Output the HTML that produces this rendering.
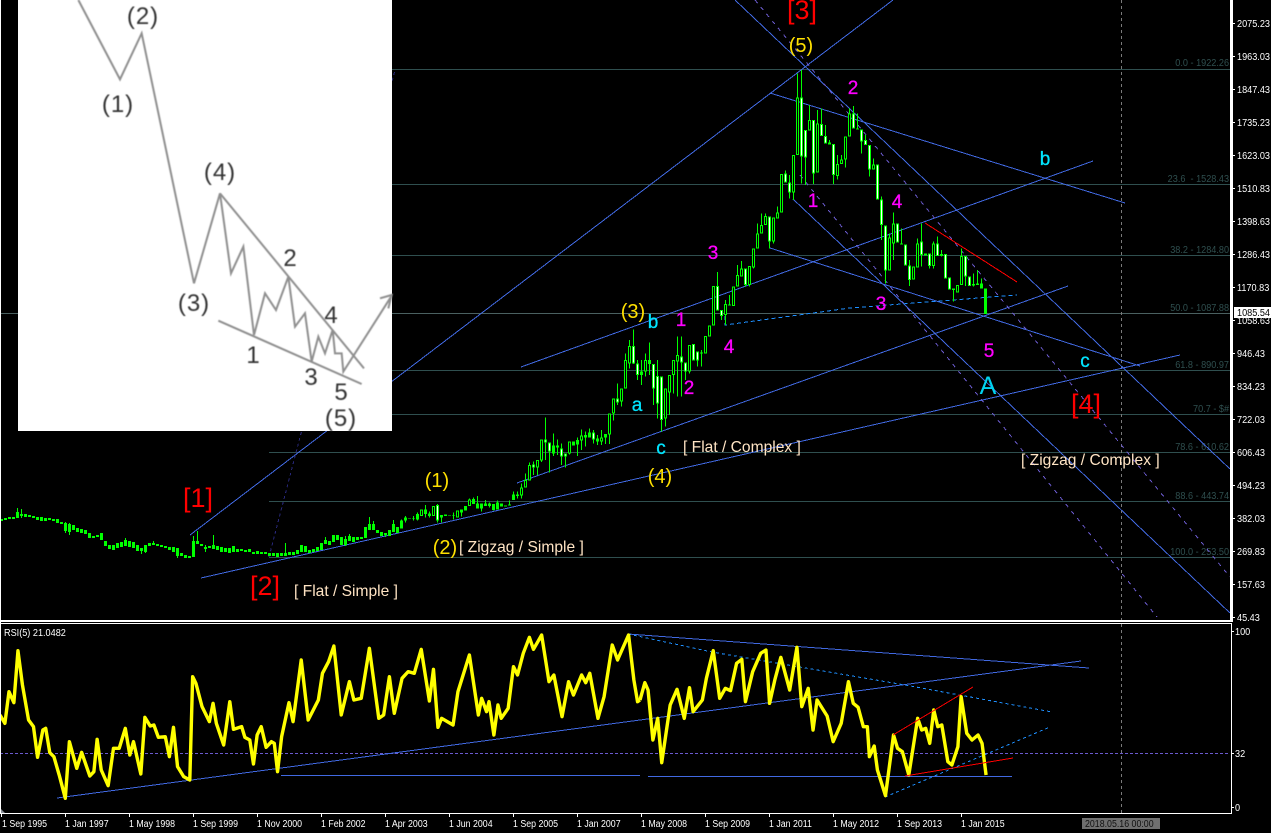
<!DOCTYPE html>
<html><head><meta charset="utf-8"><title>Chart</title>
<style>
html,body{margin:0;padding:0;background:#000;width:1271px;height:833px;overflow:hidden}
svg{display:block}
text{font-family:"Liberation Sans",Arial,sans-serif}
.ax,.dt{font-size:10.5px;fill:#fff;transform-box:fill-box;transform-origin:0 50%;transform:scaleX(.87)}
.dt{transform:scaleX(.84)}
.fb{font-size:10.5px;fill:#2f4f4f;text-anchor:end;transform-box:fill-box;transform-origin:100% 50%;transform:scaleX(.87)}
.y{font-size:20px;fill:#ffe000;text-anchor:middle}
.r{font-size:27px;fill:#f00;text-anchor:middle}
.m{font-size:19px;fill:#f0f;stroke:#f0f;stroke-width:.3px;text-anchor:middle}
.c{font-size:19px;fill:#00e5ff;stroke:#00e5ff;stroke-width:.3px;text-anchor:middle}
.b{font-size:15.6px;fill:#ffe4c4}
.i{font-size:24px;fill:#333;text-anchor:middle}
</style></head><body>
<svg width="1271" height="833" viewBox="0 0 1271 833" xmlns="http://www.w3.org/2000/svg">
<rect width="1271" height="833" fill="#000"/>

<!-- fib levels -->
<g stroke="#2f4f4f" stroke-width="1" shape-rendering="crispEdges" fill="none">
<path d="M269 69.5H1230M269 184.5H1230M269 255.5H1230M269 370.5H1230M269 414.5H1230M269 452.5H1230M269 501.5H1230M269 557.5H1230"/>
</g>
<path d="M0 313.5H1230" stroke="#4a6060" stroke-width="1" shape-rendering="crispEdges"/>
<path d="M1121.5 0V813" stroke="#7a7a7a" stroke-width="1" stroke-dasharray="3 3" shape-rendering="crispEdges"/>
<g>
<text class="fb" x="1229" y="66">0.0 - 1922.26</text>
<text class="fb" x="1229" y="182" xml:space="preserve">23.6  - 1528.43</text>
<text class="fb" x="1229" y="253">38.2 - 1284.80</text>
<text class="fb" x="1229" y="311">50.0 - 1087.88</text>
<text class="fb" x="1229" y="368">61.8 - 890.97</text>
<text class="fb" x="1229" y="412">70.7 - $#</text>
<text class="fb" x="1229" y="450">78.6 - 610.62</text>
<text class="fb" x="1229" y="499">88.6 - 443.74</text>
<text class="fb" x="1229" y="555">100.0 - 253.50</text>
</g>

<!-- trend lines -->
<g fill="none" stroke="#4169e1" stroke-width="1" shape-rendering="crispEdges">
<path d="M190 535L893 0"/>
<path d="M201 578L1180 355"/>
<path d="M517 483L1068 286"/>
<path d="M521 367L1093 161"/>
<path d="M770 93L1125 203"/>
<path d="M770 248L1140 366"/>
<path d="M735 0L1230 469"/>
<path d="M793 199L1230 613"/>
</g>
<g fill="none" stroke="#6a5acd" stroke-width="1" stroke-dasharray="4 5" shape-rendering="crispEdges">
<path d="M755 0L1230 577"/>
<path d="M800 175L1157 617"/>
</g>
<path d="M269 557L395 70" fill="none" stroke="#27277a" stroke-width="1" stroke-dasharray="3 3" shape-rendering="crispEdges"/>
<path d="M725 316V325L850 308L1017 295" fill="none" stroke="#1e90ff" stroke-width="1" stroke-dasharray="4 3" shape-rendering="crispEdges"/>
<path d="M925 223L1017 282" fill="none" stroke="#f00" stroke-width="1" shape-rendering="crispEdges"/>

<!-- candles 1995-2004 (pixel coords) -->
<g fill="none" stroke="#00ff00" shape-rendering="crispEdges">
<path stroke-width="1" d="M17.5 508V518M21.5 509V518M65.5 522V533M69.5 523V535M125.5 538V546M141.5 548V554M145.5 545V553M153.5 541V545M177.5 548V558M193.5 536V557M197.5 531V544M205.5 545V552M213.5 535V549M285.5 543V556M325.5 537V544M345.5 536V546M349.5 534V541M369.5 517V530M373.5 521V530M385.5 533V537M393.5 520V532"/>
<path stroke-width="3" d="M1.5 519V521M5.5 518V520M9.5 517V519M13.5 517V519M17.5 512V518M21.5 514V516M25.5 514V517M29.5 515V517M33.5 516V518M37.5 517V520M41.5 517V521M45.5 518V521M49.5 518V520M53.5 519V521M57.5 519V523M61.5 522V524M65.5 523V531M69.5 524V532M73.5 525V530M77.5 528V532M81.5 529V533M85.5 530V534M89.5 533V538M93.5 536V538M97.5 535V537M101.5 533V540M105.5 541V546M109.5 545V549M113.5 545V550M117.5 543V548M121.5 542V547M125.5 540V546M129.5 541V547M133.5 542V548M137.5 545V551M141.5 548V551M145.5 545V552M149.5 543V546M153.5 543V545M157.5 544V546M161.5 545V547M165.5 546V548M169.5 547V550M173.5 547V552M177.5 548V556M181.5 553V556M185.5 555V558M189.5 556V558M193.5 541V557M197.5 541V544M201.5 544V546M205.5 547V549M209.5 546V548M213.5 545V549M217.5 546V550M221.5 547V552M225.5 548V552M229.5 548V553M233.5 546V552M237.5 549V552M241.5 549V551M245.5 550V552M249.5 549V552M253.5 552V554M257.5 551V554M261.5 552V554M265.5 552V554M269.5 553V556M273.5 553V556M277.5 553V557M281.5 553V556M285.5 553V556M289.5 552V555M293.5 552V555M297.5 550V554M301.5 545V552M305.5 546V552M309.5 550V553M313.5 549V552M317.5 547V551M321.5 543V550M325.5 540V544M329.5 541V545M333.5 535V542M337.5 535V540M341.5 537V545M345.5 539V545M349.5 536V541M353.5 537V542M357.5 537V540M361.5 537V539M365.5 527V538M369.5 524V530M373.5 524V530M377.5 530V533M381.5 532V536M385.5 533V535M389.5 530V536M393.5 524V532M397.5 527V533"/>
</g>
<!-- candles 2004-2005 -->
<g transform="translate(400.17,480) scale(.33333)" fill="none" shape-rendering="crispEdges">
<path stroke="#00ff00" stroke-width="3" d="M4 118V145M16 108V128M28 114V116M40 108V122M52 98V122M64 88V108M76 75V112M88 95V113M100 78V108M112 72V128M124 105V128M136 103V108M148 106V108M160 98V118M172 92V112M184 88V110M196 78V92M208 55V78M220 52V72M232 48V85M244 70V95M256 60V78M268 68V82M280 72V92M292 62V88M304 70V80M316 76V80M328 62V76"/>
<path stroke="#00ff00" stroke-width="9" d="M4 122V145M16 113V122M28 114V116M40 114V116M52 102V118M64 88V108M76 88V102M88 100V108M100 78V108M112 75V122M124 105V113M136 103V108M148 106V108M160 106V108M172 92V112M184 88V98M196 78V92M208 58V78M220 57V72M232 70V85M244 70V85M256 70V78M268 70V78M280 72V90M292 68V88M304 70V80M316 76V80M328 73V76"/>
<path stroke="#000" stroke-width="3" d="M100 81V105M64 91V105M208 61V75M172 95V109"/>
<path stroke="#fff" stroke-width="3" d="M112 78V119"/>
</g>
<!-- candles 2005-2007 -->
<g transform="translate(500.17,380) scale(.33333)" fill="none" shape-rendering="crispEdges">
<path stroke="#00ff00" stroke-width="3" d="M40 335V360M52 335V355M64 310V355M76 280V323M88 248V302M100 245V285M112 240V285M124 178V246M136 112V240M148 187V278M160 160V228M172 178V225M184 190V255M196 220V262M208 184V224M220 184V197M232 172V228M244 148V210M256 155V200M268 145V172M280 150V190M292 165V195M304 150V195M316 162V192M328 100V192M340 55V122M352 10V75"/>
<path stroke="#00ff00" stroke-width="9" d="M40 343V360M52 343V348M64 322V347M76 300V323M88 255V302M100 253V263M112 240V263M124 178V242M136 178V188M148 187V215M160 196V220M172 196V203M184 205V230M196 220V230M208 184V220M220 184V197M232 180V194M244 166V182M256 165V172M268 157V172M280 157V178M292 176V185M304 172V185M316 162V173M328 100V163M340 55V100M352 55V68"/>
<path stroke="#000" stroke-width="3" d="M124 181V239M88 258V299M328 103V160M340 58V97M208 187V217M76 303V320M64 325V344M112 243V260M244 169V179M304 175V182"/>
<path stroke="#fff" stroke-width="3" d="M148 190V212M184 208V227M196 223V227M352 58V65M136 181V185M100 256V260M280 160V175"/>
</g>
<!-- candles 2007-2015 -->
<g transform="translate(620.17,60) scale(.33333)" fill="none" shape-rendering="crispEdges">
<path stroke="#00ff00" stroke-width="3" d="M4 985V1040M16 880V985M28 840V925M40 808V912M52 900V960M64 900V975M76 880V950M88 848V945M100 912V1035M112 900V1075M124 950V1115M136 985V1100M148 945V1065M160 900V1000M172 830V1010M184 830V1010M196 908V960M208 855V940M220 852V902M232 875V920M244 870V920M256 828V880M268 797V830M280 678V797M292 636V752M304 750V780M316 720V795M328 705V736M340 680V738M352 615V680M364 603V650M376 625V680M388 618V680M400 565V625M412 490V565M424 460V520M436 460V495M448 470V565M460 472V550M472 440V475M484 342V458M496 332V368M508 345V415M520 285V420M532 40V285M544 30V370M556 210V375M568 135V212M580 180V372M592 150V338M604 145V228M616 195V250M628 240V254M640 252V372M652 285V358M664 285V312M676 230V322M688 145V230M700 138V205M712 160V208M724 208V280M736 225V255M748 255V350M760 295V328M772 313V418M784 410V540M796 497V670M808 520V632M820 458V600M832 490V548M844 505V553M856 553V617M868 600V678M880 620V658M892 535V622M904 490V620M916 580V587M928 580V625M940 545V625M952 530V588M964 570V590M976 582V655M988 652V688M1000 685V724M1012 675V698M1024 565V675M1036 588V678M1048 650V678M1060 640V680M1072 630V675M1084 655V686"/>
<path stroke="#00ff00" stroke-width="9" d="M4 985V1025M16 900V985M28 858V910M40 858V910M52 910V945M64 935V945M76 900V935M88 900V912M100 912V985M112 948V1030M124 950V1080M136 985V1075M148 945V998M160 900V945M172 885V905M184 890V908M196 908V935M208 855V935M220 852V902M232 875V902M244 877V881M256 828V880M268 797V830M280 678V797M292 678V752M304 750V768M316 732V765M328 733V736M340 680V738M352 645V680M364 625V650M376 625V675M388 618V675M400 565V622M412 520V565M424 495V520M436 468V495M448 470V545M460 472V545M472 458V475M484 342V458M496 340V368M508 368V398M520 285V398M532 112V285M544 112V290M556 210V292M568 180V212M580 180V340M592 190V338M604 192V228M616 228V250M628 248V254M640 252V345M652 312V348M664 298V312M676 230V298M688 160V230M700 160V205M712 205V208M724 208V245M736 240V255M748 255V328M760 313V328M772 313V418M784 418V495M796 497V632M808 532V632M820 490V550M832 490V548M844 550V553M856 553V617M868 617V660M880 620V658M892 550V622M904 545V585M916 580V587M928 580V618M940 550V618M952 550V588M964 582V588M976 582V655M988 652V688M1000 685V690M1012 675V698M1024 588V675M1036 588V650M1048 650V678M1060 672V676M1072 670V675M1084 670V686M1096 685V762"/>
<path stroke="#000" stroke-width="3" d="M4 988V1022M16 903V982M28 861V907M76 903V932M136 988V1072M148 948V995M160 903V942M172 888V902M208 858V932M256 831V877M268 800V827M280 681V794M316 735V762M340 683V735M352 648V677M364 628V647M388 621V672M400 568V619M412 523V562M424 498V517M436 471V492M460 475V542M472 461V472M484 345V455M520 288V395M532 115V282M568 183V209M592 193V335M652 315V345M664 301V309M676 233V295M688 163V227M760 316V325M808 535V629M820 493V547M880 623V655M892 553V619M940 553V615M1012 678V695M1024 591V672"/>
<path stroke="#fff" stroke-width="3" d="M40 861V907M52 913V942M100 915V982M112 951V1027M124 953V1077M184 893V905M196 911V932M220 855V899M232 878V899M292 681V749M304 753V765M376 628V672M448 473V542M496 343V365M508 371V395M544 115V287M556 213V289M580 183V337M604 195V225M616 231V247M640 255V342M700 163V202M724 211V242M736 243V252M748 258V325M772 316V415M784 421V492M796 500V629M832 493V545M856 556V614M868 620V657M904 548V582M928 583V615M952 553V585M976 585V652M988 655V685M1036 591V647M1048 653V675"/>
</g>

<!-- wave labels -->
<text class="y" x="437" y="487">(1)</text>
<text class="y" x="445" y="554">(2)</text>
<text class="y" x="633" y="318">(3)</text>
<text class="y" x="660" y="483">(4)</text>
<text class="y" x="801" y="52">(5)</text>
<text class="r" x="198" y="507">[1]</text>
<text class="r" x="265" y="595">[2]</text>
<text class="r" x="802" y="19">[3]</text>
<text class="r" x="1086" y="413">[4]</text>
<text class="m" x="853" y="94">2</text>
<text class="m" x="813" y="207">1</text>
<text class="m" x="897" y="208">4</text>
<text class="m" x="881" y="310">3</text>
<text class="m" x="989" y="357">5</text>
<text class="m" x="713" y="259">3</text>
<text class="m" x="681" y="326">1</text>
<text class="m" x="729" y="353">4</text>
<text class="m" x="689" y="394">2</text>
<text class="c" x="637" y="411">a</text>
<text class="c" x="653" y="328">b</text>
<text class="c" x="661" y="454">c</text>
<text class="c" x="1045" y="165">b</text>
<text class="c" x="1085" y="367">c</text>
<text class="c" x="988" y="394" style="font-size:25px;fill:#00d4f0;stroke:none">A</text>
<text class="b" x="294" y="596">[ Flat / Simple ]</text>
<text class="b" x="459" y="552">[ Zigzag / Simple ]</text>
<text class="b" x="683" y="452">[ Flat / Complex ]</text>
<text class="b" x="1021" y="465">[ Zigzag / Complex ]</text>

<!-- inset reference image -->
<rect x="18" y="0" width="374" height="431" fill="#fff"/>
<g style="filter:blur(.5px)">
<g transform="scale(.33333)" fill="none" stroke="#8f8f8f" stroke-width="6">
<path d="M235 0L360 238L425 100L582 850L660 580L693 820L730 740L762 1005L795 880L828 930L865 830L885 980L915 940L935 1085L955 1010L975 1060L998 990L1005 1060L1025 1060L1030 1115L1172 892M1140 895L1175 885L1165 925"/>
<path d="M660 580L1092 1105M655 962L1085 1152"/>
</g>
<text class="i" x="118" y="112" letter-spacing="1">(1)</text>
<text class="i" x="143" y="24" letter-spacing="1">(2)</text>
<text class="i" x="194" y="311" letter-spacing="1">(3)</text>
<text class="i" x="220" y="180" letter-spacing="1">(4)</text>
<text class="i" x="290" y="266">2</text>
<text class="i" x="331" y="323">4</text>
<text class="i" x="253" y="363">1</text>
<text class="i" x="311" y="385">3</text>
<text class="i" x="341" y="400">5</text>
<text class="i" x="341" y="426" letter-spacing="1">(5)</text>
</g>

<!-- RSI panel -->
<path d="M0 753.5H1230" stroke="#6a5acd" stroke-width="1" stroke-dasharray="3 2" shape-rendering="crispEdges"/>
<g fill="none" stroke-linejoin="round" shape-rendering="crispEdges">
<path d="M57 798L1081 661" stroke="#4169e1" stroke-width="1"/>
<path d="M628 634L1089 668" stroke="#4169e1" stroke-width="1"/>
<path d="M281 775.5H640M648 776.5H1012" stroke="#4169e1" stroke-width="1"/>
<path d="M628 634L712 652L905 685L1052 712" stroke="#1e90ff" stroke-width="1" stroke-dasharray="3 3"/>
<path d="M885 797L1050 727" stroke="#1e90ff" stroke-width="1" stroke-dasharray="3 3"/>
</g>
<g fill="none" stroke="#ffff00" stroke-linejoin="round">
<polyline transform="scale(.40816,.33333) translate(0,1860)" vector-effect="non-scaling-stroke" stroke-width="3.4" points="0,285 12,310 22,215 34,248 44,92 55,195 70,300 82,320 92,412 105,330 112,325 122,398 132,410 145,465 160,535 170,365 188,445 200,397 220,468 230,455 238,358 248,450 265,497 278,385 292,385 307,325 318,405 327,365 345,462 355,292 368,318 377,315 388,352 405,350 415,410 425,322 435,440 450,470 465,480 472,170 480,190 495,260 513,305 522,250 530,310 548,375 563,245 572,328 592,320 600,352 612,360 621,432 630,345 640,320 652,382 665,365 672,370 680,455 690,350 708,248 718,305 738,120 755,300 780,240 790,160 805,125 818,78 836,285 856,185 867,240 885,235 905,85 928,295 940,285 954,170 966,280 985,175 1000,155 1015,160 1032,88 1052,243 1062,148 1073,322 1082,295 1110,315 1122,215 1150,105 1172,285 1180,235 1192,275 1198,245 1210,345 1220,255 1228,295 1245,265 1258,140 1268,165 1282,100 1297,52 1307,88 1327,45 1345,185 1357,165 1377,290 1393,185 1405,225 1425,165 1435,188 1445,160 1465,295 1480,230 1500,75 1513,120 1540,45 1553,180 1562,245 1568,240"/>
<polyline transform="translate(640,620) scale(.40241,.33333)" vector-effect="non-scaling-stroke" stroke-width="3.4" points="0,240 12,188 20,210 32,360 44,295 54,428 75,255 92,208 110,295 123,203 132,275 155,240 165,175 182,92 198,235 212,205 225,212 240,130 253,118 262,245 280,155 300,100 313,90 322,250 335,180 350,112 372,210 390,82 402,260 418,205 430,330 440,240 465,288 480,365 500,310 518,185 530,250 542,262 555,320 565,320 570,410 582,378 590,450 610,527 630,345 640,385 652,395 668,465 690,295 700,330 710,325 720,370 730,270 740,320 750,315 765,425 775,435 790,380 798,230 812,340 825,360 840,345 850,370 860,465"/>
</g>
<path d="M893 735L973 687M905 776L1013 758" fill="none" stroke="#f00" stroke-width="1" shape-rendering="crispEdges"/>
<path d="M0 808L5 813H0Z" fill="#8a8f98"/>
<text class="ax" x="4" y="636">RSI(5) 21.0482</text>

<!-- frames -->
<g fill="#fff" shape-rendering="crispEdges">
<rect x="0" y="0" width="1" height="813"/>
<rect x="1230" y="0" width="3" height="621"/>
<rect x="0" y="620" width="1233" height="2"/>
<rect x="0" y="623" width="1232" height="1"/>
<rect x="1231" y="623" width="1" height="191"/>
<rect x="0" y="813" width="1232" height="1"/>
</g>
<path fill="none" stroke="#fff" shape-rendering="crispEdges" d="M1233 23.5h2M1233 56.5h2M1233 89.5h2M1233 122.5h2M1233 155.5h2M1233 188.5h2M1233 221.5h2M1233 254.5h2M1233 287.5h2M1233 320.5h2M1233 353.5h2M1233 386.5h2M1233 419.5h2M1233 452.5h2M1233 485.5h2M1233 518.5h2M1233 551.5h2M1233 584.5h2M1233 617.5h2M1232 631.5h2M1232 753.5h2M1232 807.5h2M1.5 814v3M65.5 814v3M129.5 814v3M193.5 814v3M257.5 814v3M321.5 814v3M385.5 814v3M449.5 814v3M513.5 814v3M577.5 814v3M641.5 814v3M705.5 814v3M769.5 814v3M833.5 814v3M897.5 814v3M961.5 814v3"/>

<!-- price axis -->
<text class="ax" x="1237" y="27">2075.23</text>
<text class="ax" x="1237" y="60">1963.03</text>
<text class="ax" x="1237" y="93">1847.43</text>
<text class="ax" x="1237" y="126">1735.23</text>
<text class="ax" x="1237" y="159">1623.03</text>
<text class="ax" x="1237" y="192">1510.83</text>
<text class="ax" x="1237" y="225">1398.63</text>
<text class="ax" x="1237" y="258">1286.43</text>
<text class="ax" x="1237" y="291">1170.83</text>
<text class="ax" x="1237" y="324">1058.63</text>
<text class="ax" x="1237" y="357">946.43</text>
<text class="ax" x="1237" y="390">834.23</text>
<text class="ax" x="1237" y="423">722.03</text>
<text class="ax" x="1237" y="456">606.43</text>
<text class="ax" x="1237" y="489">494.23</text>
<text class="ax" x="1237" y="522">382.03</text>
<text class="ax" x="1237" y="555">269.83</text>
<text class="ax" x="1237" y="588">157.63</text>
<text class="ax" x="1237" y="621">45.43</text>
<rect x="1234" y="307" width="37" height="11" fill="#fff"/>
<text class="ax" x="1237" y="316" style="fill:#000">1085.54</text>
<text class="ax" x="1235" y="635">100</text>
<text class="ax" x="1235" y="757">32</text>
<text class="ax" x="1235" y="811">0</text>

<!-- time axis -->
<text class="dt" x="2" y="827">1 Sep 1995</text>
<text class="dt" x="65" y="827">1 Jan 1997</text>
<text class="dt" x="129" y="827">1 May 1998</text>
<text class="dt" x="193" y="827">1 Sep 1999</text>
<text class="dt" x="257" y="827">1 Nov 2000</text>
<text class="dt" x="321" y="827">1 Feb 2002</text>
<text class="dt" x="385" y="827">1 Apr 2003</text>
<text class="dt" x="449" y="827">1 Jun 2004</text>
<text class="dt" x="513" y="827">1 Sep 2005</text>
<text class="dt" x="577" y="827">1 Jan 2007</text>
<text class="dt" x="641" y="827">1 May 2008</text>
<text class="dt" x="705" y="827">1 Sep 2009</text>
<text class="dt" x="769" y="827">1 Jan 2011</text>
<text class="dt" x="833" y="827">1 May 2012</text>
<text class="dt" x="897" y="827">1 Sep 2013</text>
<text class="dt" x="961" y="827">1 Jan 2015</text>
<rect x="1082" y="818" width="78" height="11" fill="#6f6f6f"/>
<text class="dt" x="1085" y="827" style="fill:#111">2018.05.16 00:00</text>
</svg>
</body></html>
